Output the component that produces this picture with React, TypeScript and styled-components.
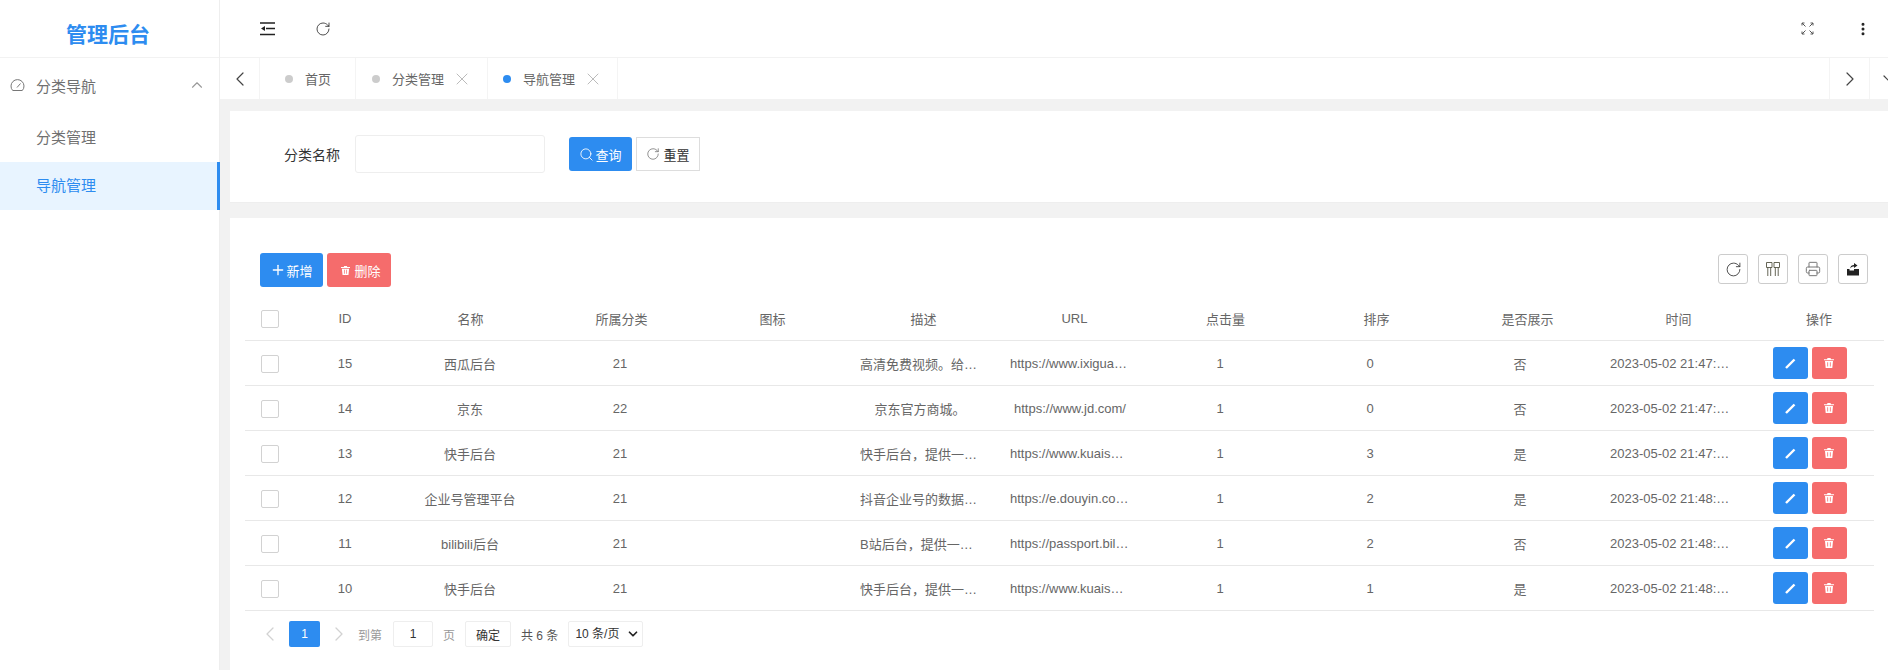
import React from 'react';
import styled, { createGlobalStyle } from 'styled-components';
import { ChevronDown, ChevronLeft, ChevronRight, ChevronUp, EllipsisVertical, Plus, Printer, RotateCw, Search, X } from 'lucide-react';

const blue = '#2d8cf0';
const red = '#f56c6c';

const GlobalStyle = createGlobalStyle`
  html, body {
    margin: 0;
    height: 100%;
    overflow: hidden;
    background: #fff;
  }
  body {
    font-family: "Liberation Sans", "Noto Sans CJK SC", sans-serif;
    font-size: 13px;
    color: #666;
  }
  * {
    box-sizing: border-box;
  }
`;

const Shell = styled.div`
  display: grid;
  grid-template-columns: 220px 1689px;
  width: 1909px;
  height: 670px;
`;

const Sidebar = styled.aside`
  background: #fff;
  border-right: 1px solid #eee;
`;

const Logo = styled.div`
  height: 58px;
  padding: 8px 3px 0 0;
  display: flex;
  align-items: center;
  justify-content: center;
  border-bottom: 1px solid #f2f2f2;
  color: ${blue};
  font-size: 21px;
  font-weight: 700;
`;

const MenuGroup = styled.div`
  height: 56px;
  padding: 0 13px 2px 10px;
  display: flex;
  align-items: center;
  gap: 11px;
  font-size: 15px;
  color: #707070;
  svg:last-child {
    margin-left: auto;
    color: #999;
  }
`;

const MenuItem = styled.div<{ $active?: boolean }>`
  height: 48px;
  padding: 0 0 3px 36px;
  display: flex;
  align-items: center;
  font-size: 15px;
  width: 220px;
  color: ${(p) => (p.$active ? blue : '#707070')};
  background: ${(p) => (p.$active ? '#e8f4ff' : 'transparent')};
  border-right: 3px solid ${(p) => (p.$active ? blue : 'transparent')};
`;

const Main = styled.main`
  background: #f2f2f2;
  display: flex;
  flex-direction: column;
  min-width: 0;
`;

const Header = styled.header`
  height: 58px;
  padding: 0 19px 0 20px;
  display: flex;
  align-items: center;
  background: #fff;
  border-bottom: 1px solid #f2f2f2;
`;

const HeaderIcon = styled.span`
  width: 55px;
  display: flex;
  align-items: center;
  justify-content: center;
  color: #222;
`;

const Spacer = styled.div`
  flex: 1;
`;

const TabBar = styled.nav`
  height: 41px;
  display: flex;
  background: #fff;
`;

const TabArrow = styled.div<{ $side: 'left' | 'right' }>`
  width: 40px;
  display: flex;
  align-items: center;
  justify-content: center;
  color: #444;
  border-${(p) => (p.$side === 'left' ? 'right' : 'left')}: 1px solid #f4f4f4;
`;

const Tab = styled.div<{ $left: number; $right: number }>`
  display: flex;
  align-items: center;
  padding: 0 ${(p) => p.$right}px 0 ${(p) => p.$left}px;
  border-right: 1px solid #f4f4f4;
  color: #666;
  svg {
    margin: 0 -4px 0 8px;
    color: #bbb;
  }
`;

const TabDot = styled.i<{ $active?: boolean }>`
  width: 8px;
  height: 8px;
  margin-right: 12px;
  border-radius: 50%;
  background: ${(p) => (p.$active ? blue : '#ccc')};
`;

const SearchCard = styled.section`
  height: 92px;
  margin: 12px 0 15px 10px;
  padding: 24px 0 0;
  display: flex;
  align-items: flex-start;
  background: #fff;
  border-bottom: 1px solid #eee;
`;

const FieldLabel = styled.label`
  width: 110px;
  height: 38px;
  display: flex;
  align-items: center;
  justify-content: flex-end;
  margin-right: 15px;
  font-size: 14px;
  color: #333;
`;

const TextInput = styled.input`
  width: 190px;
  height: 38px;
  margin-right: 24px;
  border: 1px solid #eee;
  border-radius: 3px;
  outline: none;
`;

const Button = styled.button<{ $color: string; $width: number }>`
  width: ${(p) => p.$width}px;
  height: 34px;
  padding: 0;
  display: inline-flex;
  align-items: center;
  justify-content: center;
  gap: 4px;
  border: none;
  border-radius: 3px;
  background: ${(p) => p.$color};
  color: #fff;
  font: inherit;
`;

const SearchButton = styled(Button)`
  margin: 2px 4px 0 0;
  gap: 1px;
`;

const ResetButton = styled(SearchButton)`
  gap: 3px;
  border: 1px solid #ddd;
  border-radius: 0;
  color: #333;
  svg {
    color: #666;
  }
`;

const AddButton = styled(Button)`
  gap: 0;
`;

const DeleteButton = styled(Button)`
  padding-left: 4px;
`;

const TableCard = styled.section`
  flex: 1;
  margin-left: 10px;
  padding: 35px 0 0 15px;
  background: #fff;
`;

const TableFrame = styled.div`
  width: 1639px;
`;

const Toolbar = styled.div`
  height: 34px;
  margin-bottom: 9px;
  padding: 0 16px 0 15px;
  display: flex;
  align-items: flex-start;
  gap: 4px;
`;

const ToolActions = styled.div`
  margin: 1px 0 0 auto;
  display: flex;
  gap: 10px;
`;

const ToolIcon = styled.span`
  width: 30px;
  height: 30px;
  display: flex;
  align-items: center;
  justify-content: center;
  border: 1px solid #ccc;
  border-radius: 3px;
  color: #333;
`;

const Row = styled.div<{ $head?: boolean }>`
  display: grid;
  grid-template-columns: ${(p) => (p.$head ? '50px 100px repeat(9, 151px) 130px' : '50px 100px repeat(9, 150px) 129px')};
  height: 45px;
  width: ${(p) => (p.$head ? '1639px' : '1629px')};
  border-bottom: 1px solid #e8e8e8;
  color: #666;
`;

const Cell = styled.div<{ $clipped?: boolean }>`
  padding: 0 15px;
  display: flex;
  align-items: center;
  justify-content: ${(p) => (p.$clipped ? 'flex-start' : 'center')};
  white-space: nowrap;
  overflow: hidden;
`;

const CheckCell = styled(Cell)`
  padding: 2px 0 0;
`;

const ActionCell = styled(Cell)`
  padding: 0;
  gap: 4px;
`;

const Checkbox = styled.span`
  width: 18px;
  height: 18px;
  border: 1px solid #d2d2d2;
  border-radius: 2px;
`;

const RowButton = styled(Button)`
  height: 32px;
`;

const Pager = styled.div`
  height: 26px;
  margin-top: 10px;
  padding-left: 16px;
  display: flex;
  align-items: center;
  gap: 10px;
  font-size: 12px;
  color: #999;
`;

const PagerArrow = styled.span`
  width: 18px;
  display: flex;
  justify-content: center;
  color: #d2d2d2;
  svg {
    flex: none;
  }
`;

const PageCurrent = styled.span`
  width: 31px;
  height: 26px;
  display: flex;
  align-items: center;
  justify-content: center;
  border-radius: 2px;
  background: ${blue};
  color: #fff;
`;

const PageInput = styled.input`
  width: 40px;
  height: 26px;
  margin-left: 1px;
  padding: 0;
  border: 1px solid #eee;
  border-radius: 2px;
  outline: none;
  text-align: center;
  font: inherit;
  color: #333;
`;

const PageConfirm = styled.button`
  width: 46px;
  height: 26px;
  padding: 0;
  border: 1px solid #eee;
  border-radius: 2px;
  background: #fff;
  font: inherit;
  color: #333;
`;

const PageTotal = styled.span`
  color: #555;
`;

const SelectWrap = styled.div`
  position: relative;
  width: 75px;
  height: 26px;
  svg {
    position: absolute;
    top: 6px;
    right: 3px;
    color: #222;
    pointer-events: none;
  }
`;

const PageSelect = styled.select`
  width: 100%;
  height: 100%;
  padding: 0 0 0 6px;
  appearance: none;
  border: 1px solid #eee;
  border-radius: 2px;
  outline: none;
  background: #fff;
  font: inherit;
  color: #333;
`;

const FoldIcon = () => (
  <svg width="15" height="14" viewBox="0 0 15 14" fill="none">
    <path d="M0 1h15M6 6.500h9M0 12.500h15" stroke="#222" strokeWidth="1.600" />
    <path d="M1 6.500 5 4v5z" fill="#222" />
  </svg>
);

const FullscreenIcon = () => (
  <svg width="13" height="13" viewBox="0 0 13 13" fill="none" stroke="#555" strokeWidth="1">
    <path d="M4.500 4.500 1 1M1 3.500V1h2.500M8.500 4.500 12 1M9.500 1H12v2.500M4.500 8.500 1 12M1 9.500V12h2.500M8.500 8.500 12 12M12 9.500V12H9.500" />
  </svg>
);

const GaugeIcon = () => (
  <svg width="15" height="14" viewBox="0 0 15 14" fill="none" stroke="#777" strokeWidth="1">
    <path d="M2.700 12.500a6.500 6.500 0 1 1 9.600 0z" />
    <path d="M7 9.500 10.500 5.500" />
  </svg>
);

const ColsIcon = () => (
  <svg width="14" height="14" viewBox="0 0 14 14" fill="none" stroke="#554" strokeWidth="0.900">
    <path d="M.5.500h5.500v5H.5zM8 .5h5.500v5H8zM1.800 5.500V14M4.700 5.500V14M9.300 5.500V14M12.200 5.500V14" />
  </svg>
);

const ExportIcon = () => (
  <svg width="14" height="14" viewBox="0 0 14 14" fill="#222">
    <path d="M1 7h2.500v1.500H8V7h5v6.500H1z" />
    <path d="M4 6.500C4.500 4 6 3 8 3V1l3.500 2.500L8 6V4.500c-1.500 0-2.800.5-4 2z" />
  </svg>
);

const TrashIcon = ({ size = 10 }: { size?: number }) => (
  <svg width={size} height={size} viewBox="0 0 10 10" fill="#fff">
    <path d="M3.500 0h3l.5 1.200H10v1.100H0V1.200h3z" />
    <path d="M1 3h8L8.300 10H1.700zM3.300 4.200v4.400h.8V4.200zm2.600 0v4.400h.8V4.200z" fillRule="evenodd" />
  </svg>
);

const PencilIcon = () => (
  <svg width="11" height="11" viewBox="0 0 11 11" fill="none" stroke="#fff">
    <path d="M1 10 9.500 1.500" strokeWidth="2.400" />
  </svg>
);

type Item = {
  id: number;
  name: string;
  category: number;
  desc: string;
  url: string;
  clicks: number;
  sort: number;
  shown: string;
  time: string;
};

const items: Item[] = [
  { id: 15, name: '西瓜后台', category: 21, desc: '高清免费视频。给…', url: 'https://www.ixigua…', clicks: 1, sort: 0, shown: '否', time: '2023-05-02 21:47:…' },
  { id: 14, name: '京东', category: 22, desc: '京东官方商城。', url: 'https://www.jd.com/', clicks: 1, sort: 0, shown: '否', time: '2023-05-02 21:47:…' },
  { id: 13, name: '快手后台', category: 21, desc: '快手后台，提供一…', url: 'https://www.kuais…', clicks: 1, sort: 3, shown: '是', time: '2023-05-02 21:47:…' },
  { id: 12, name: '企业号管理平台', category: 21, desc: '抖音企业号的数据…', url: 'https://e.douyin.co…', clicks: 1, sort: 2, shown: '是', time: '2023-05-02 21:48:…' },
  { id: 11, name: 'bilibili后台', category: 21, desc: 'B站后台，提供一…', url: 'https://passport.bil…', clicks: 1, sort: 2, shown: '否', time: '2023-05-02 21:48:…' },
  { id: 10, name: '快手后台', category: 21, desc: '快手后台，提供一…', url: 'https://www.kuais…', clicks: 1, sort: 1, shown: '是', time: '2023-05-02 21:48:…' },
];

const columns = ['ID', '名称', '所属分类', '图标', '描述', 'URL', '点击量', '排序', '是否展示', '时间', '操作'];

const isClipped = (text: string) => text.endsWith('…');

export default function App() {
  return (
    <Shell>
      <GlobalStyle />
      <Sidebar>
        <Logo>管理后台</Logo>
        <MenuGroup>
          <GaugeIcon />
          分类导航
          <ChevronUp size={18} strokeWidth={1.5} />
        </MenuGroup>
        <MenuItem>分类管理</MenuItem>
        <MenuItem $active>导航管理</MenuItem>
      </Sidebar>
      <Main>
        <Header>
          <HeaderIcon>
            <FoldIcon />
          </HeaderIcon>
          <HeaderIcon>
            <RotateCw size={16} strokeWidth={1.2} />
          </HeaderIcon>
          <Spacer />
          <HeaderIcon>
            <FullscreenIcon />
          </HeaderIcon>
          <HeaderIcon>
            <EllipsisVertical size={16} strokeWidth={2.5} />
          </HeaderIcon>
        </Header>
        <TabBar>
          <TabArrow $side="left">
            <ChevronLeft size={24} strokeWidth={1.2} />
          </TabArrow>
          <Tab $left={25} $right={24}>
            <TabDot />
            首页
          </Tab>
          <Tab $left={16} $right={19}>
            <TabDot />
            分类管理
            <X size={20} strokeWidth={1.2} />
          </Tab>
          <Tab $left={15} $right={18}>
            <TabDot $active />
            导航管理
            <X size={20} strokeWidth={1.2} />
          </Tab>
          <Spacer />
          <TabArrow $side="right">
            <ChevronRight size={24} strokeWidth={1.2} />
          </TabArrow>
          <TabArrow $side="right">
            <ChevronDown size={24} strokeWidth={1.2} />
          </TabArrow>
        </TabBar>
        <SearchCard>
          <FieldLabel>分类名称</FieldLabel>
          <TextInput />
          <SearchButton $color={blue} $width={63}>
            <Search size={15} strokeWidth={1.4} />
            查询
          </SearchButton>
          <ResetButton $color="#fff" $width={64}>
            <RotateCw size={14} strokeWidth={1.2} />
            重置
          </ResetButton>
        </SearchCard>
        <TableCard>
          <TableFrame>
            <Toolbar>
              <AddButton $color={blue} $width={63}>
                <Plus size={16} strokeWidth={2} />
                新增
              </AddButton>
              <DeleteButton $color={red} $width={64}>
                <TrashIcon size={9} />
                删除
              </DeleteButton>
              <ToolActions>
                <ToolIcon>
                  <RotateCw size={17} strokeWidth={1.2} />
                </ToolIcon>
                <ToolIcon>
                  <ColsIcon />
                </ToolIcon>
                <ToolIcon>
                  <Printer size={16} strokeWidth={1.5} color="#777" />
                </ToolIcon>
                <ToolIcon>
                  <ExportIcon />
                </ToolIcon>
              </ToolActions>
            </Toolbar>
            <Row $head>
              <CheckCell>
                <Checkbox />
              </CheckCell>
              {columns.map((c) => (
                <Cell key={c}>{c}</Cell>
              ))}
            </Row>
            {items.map((item) => (
              <Row key={item.id}>
                <CheckCell>
                  <Checkbox />
                </CheckCell>
                <Cell>{item.id}</Cell>
                <Cell>{item.name}</Cell>
                <Cell>{item.category}</Cell>
                <Cell />
                <Cell $clipped={isClipped(item.desc)}>{item.desc}</Cell>
                <Cell $clipped={isClipped(item.url)}>{item.url}</Cell>
                <Cell>{item.clicks}</Cell>
                <Cell>{item.sort}</Cell>
                <Cell>{item.shown}</Cell>
                <Cell $clipped={isClipped(item.time)}>{item.time}</Cell>
                <ActionCell>
                  <RowButton $color={blue} $width={35}>
                    <PencilIcon />
                  </RowButton>
                  <RowButton $color={red} $width={35}>
                    <TrashIcon />
                  </RowButton>
                </ActionCell>
              </Row>
            ))}
            <Pager>
              <PagerArrow>
                <ChevronLeft size={24} strokeWidth={1.3} />
              </PagerArrow>
              <PageCurrent>1</PageCurrent>
              <PagerArrow>
                <ChevronRight size={24} strokeWidth={1.3} />
              </PagerArrow>
              到第
              <PageInput defaultValue="1" />
              页
              <PageConfirm>确定</PageConfirm>
              <PageTotal>共 6 条</PageTotal>
              <SelectWrap>
                <PageSelect defaultValue="10">
                  <option value="10">10 条/页</option>
                  <option value="20">20 条/页</option>
                </PageSelect>
                <ChevronDown size={14} strokeWidth={3} />
              </SelectWrap>
            </Pager>
          </TableFrame>
        </TableCard>
      </Main>
    </Shell>
  );
}
